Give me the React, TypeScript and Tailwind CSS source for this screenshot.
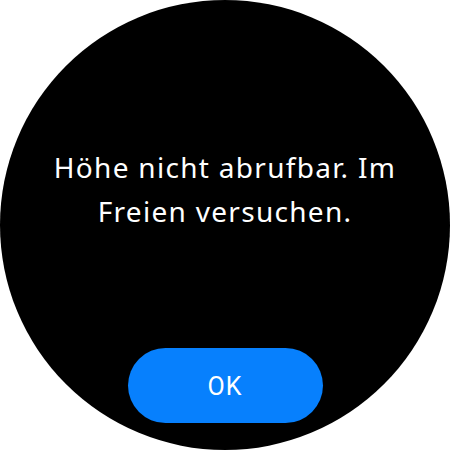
export default function App() {
  return (
    <div className="w-[450px] h-[450px] bg-white">
      <div className="w-[450px] h-[450px] rounded-full bg-black flex flex-col items-center overflow-hidden">
        <p
          className="mt-[145px] text-white text-center text-[28px] leading-[44px] tracking-[1.3px]"
          style={{ fontFamily: '"Noto Sans", sans-serif' }}
        >
          Höhe nicht abrufbar. Im
          <br />
          Freien versuchen.
        </p>
        <button
          className="mt-[115px] w-[195px] h-[75px] rounded-full bg-[#0780fd] text-white text-[25px] tracking-[1px] pt-[2px] flex items-center justify-center"
          style={{ fontFamily: 'Roboto, sans-serif' }}
        >
          OK
        </button>
      </div>
    </div>
  );
}
